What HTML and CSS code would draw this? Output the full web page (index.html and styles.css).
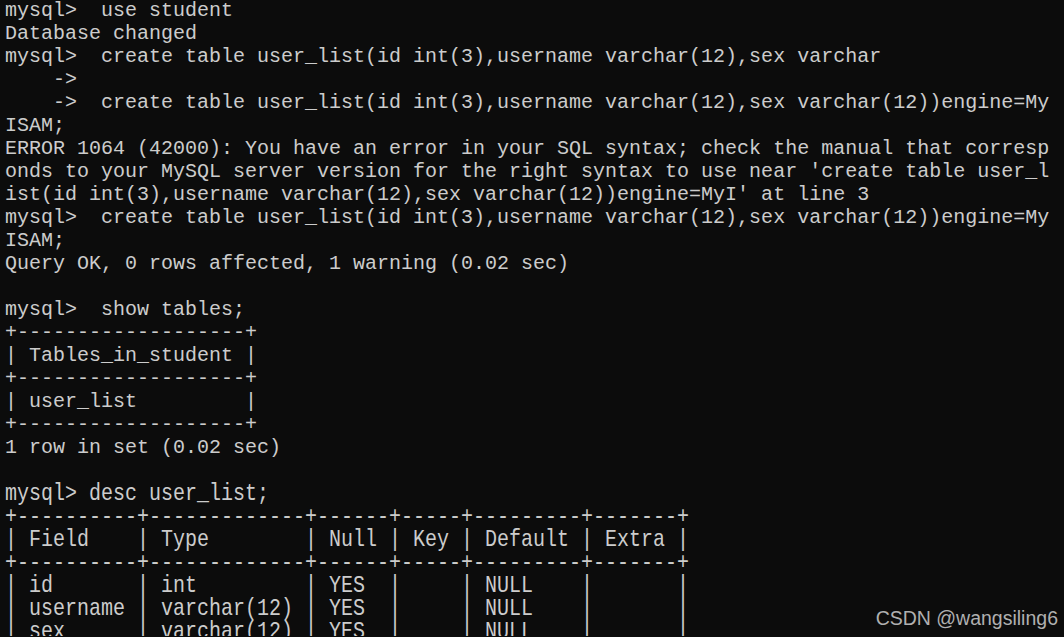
FILE: index.html
```
<!DOCTYPE html>
<html>
<head>
<meta charset="utf-8">
<link rel="stylesheet" href="styles.css">
</head>
<body>
<main class="terminal">
<pre class="out">mysql>  use student
Database changed
mysql>  create table user_list(id int(3),username varchar(12),sex varchar
    ->
    ->  create table user_list(id int(3),username varchar(12),sex varchar(12))engine=My
ISAM;
ERROR 1064 (42000): You have an error in your SQL syntax; check the manual that corresp
onds to your MySQL server version for the right syntax to use near 'create table user_l
ist(id int(3),username varchar(12),sex varchar(12))engine=MyI' at line 3
mysql>  create table user_list(id int(3),username varchar(12),sex varchar(12))engine=My
ISAM;
Query OK, 0 rows affected, 1 warning (0.02 sec)

mysql>  show tables;
+-------------------+
| Tables_in_student |
+-------------------+
| user_list         |
+-------------------+
1 row in set (0.02 sec)
</pre>
<div class="gap"></div>
<pre class="out narrow">mysql> desc user_list;
+----------+-------------+------+-----+---------+-------+
| Field    | Type        | Null | Key | Default | Extra |
+----------+-------------+------+-----+---------+-------+
| id       | int         | YES  |     | NULL    |       |
| username | varchar(12) | YES  |     | NULL    |       |
| sex      | varchar(12) | YES  |     | NULL    |       |
</pre>
<div class="watermark">CSDN @wangsiling6</div>
</main>
</body>
</html>
```
FILE: styles.css
```
html, body {
  margin: 0;
  padding: 0;
  background: #0c0c0c;
  overflow: hidden;
}
.terminal {
  position: relative;
  width: 1064px;
  height: 637px;
  overflow: hidden;
  background: #0c0c0c;
  color: #cccccc;
  padding-top: 0;
  margin-top: -1px;
}
.out {
  margin: 0;
  padding: 0 0 0 5px;
  font-family: "Liberation Mono", "DejaVu Sans Mono", monospace;
  font-size: 20px;
  line-height: 23px;
  white-space: pre;
}
.gap {
  height: 23px;
}
.narrow {
  font-size: 24px;
  transform: scaleX(0.8333);
  transform-origin: 0 0;
  padding-left: 6px;
}
.watermark {
  position: absolute;
  right: 6px;
  bottom: 6px;
  font-family: "Liberation Sans", Arial, sans-serif;
  font-size: 19.5px;
  color: #b0b0b0;
}
```
